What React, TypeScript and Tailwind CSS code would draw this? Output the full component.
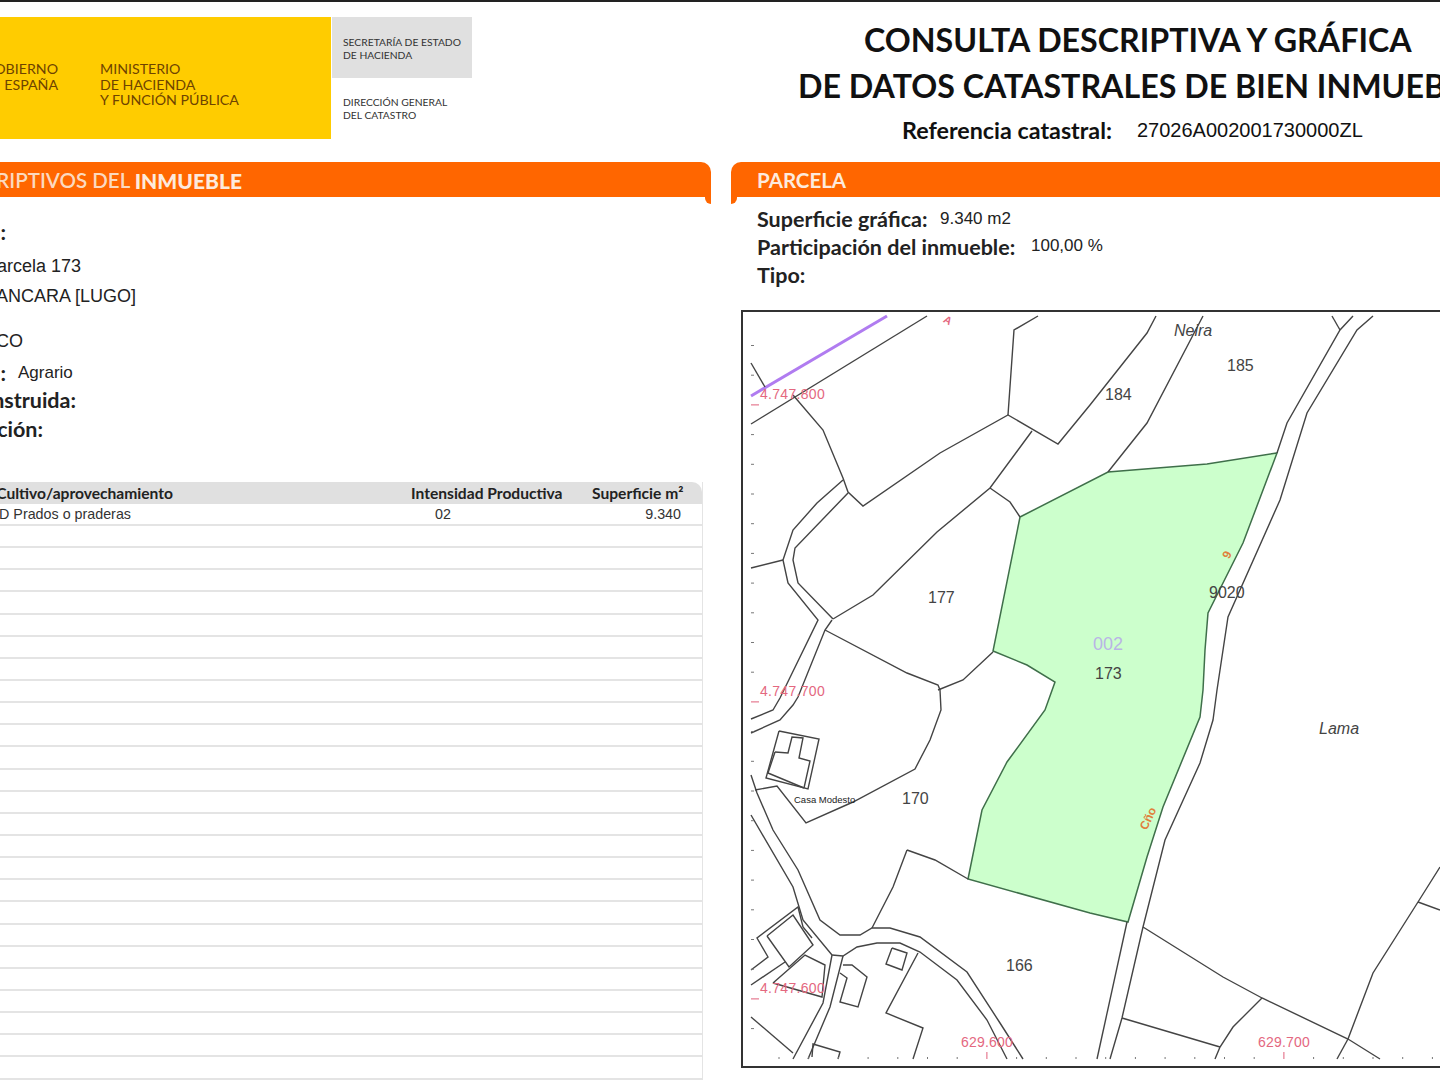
import React from "react";

const heading = "font-['Lato','Open_Sans',sans-serif]";
const body = "font-['Liberation_Sans',Arial,sans-serif]";

const lines = [
  "751,424 927,316",
  "751,363 765,387",
  "793,395 823,430 843,478 848,492 863,506 940,453 1008,415 1058,444 1090,405 1147,333 1156,316",
  "1008,415 1014,330 1038,316",
  "843,480 817,503 793,530 783,560 788,583 818,620 780,698 773,710 751,719",
  "848,493 795,548 793,560 798,583 833,619",
  "832,620 825,630 798,697 793,705 780,720 751,733",
  "751,568 783,560",
  "833,619 873,595 937,532 990,488 1032,431",
  "990,488 1010,502 1020,517",
  "825,630 907,673 938,685 940,690 941,710 930,740 915,769 853,802 806,823 777,786 755,790",
  "938,690 963,680 993,652",
  "1373,316 1357,330 1307,413 1280,500 1228,617 1217,690 1213,720 1200,763 1165,840 1143,927 1122,1018 1110,1059",
  "1353,316 1340,330 1287,423 1277,453",
  "1127,922 1097,1059",
  "1332,316 1340,330",
  "1203,316 1147,423 1108,472",
  "1143,927 1223,977 1262,998 1348,1039 1380,1059",
  "1262,998 1233,1027 1220,1047 1215,1059",
  "1122,1018 1220,1047",
  "1348,1039 1373,973 1418,902 1440,867",
  "1418,902 1440,910",
  "1348,1039 1337,1059",
  "907,850 935,860 968,879",
  "907,850 893,887 872,928",
  "751,775 757,793 773,830 798,870 820,920 840,935 860,935 872,928 890,928 920,937 967,972 1000,1023 1023,1059",
  "751,815 793,887 803,920 832,955",
  "832,955 843,956 857,947 877,943 900,943 920,952 957,980 987,1020 1007,1059",
  "832,955 823,1003 793,1059",
  "843,956 830,1007 808,1059",
  "779,731 819,739 808,789 766,778 779,731",
  "775,752 788,753 792,737 803,738 799,758 810,761 804,788",
  "775,752 768,773 804,788",
  "767,936 793,915 813,945 789,967 767,936",
  "751,970 768,957 757,938 798,907 803,927 812,938",
  "773,983 805,955 825,965 822,997 773,983",
  "751,985 785,962",
  "751,1017 793,1053",
  "843,965 852,965 867,977 858,1007 840,1002 847,978 840,973",
  "892,948 907,953 902,970 886,964 892,948",
  "918,953 886,1013 923,1028 913,1059",
  "812,1057 813,1044 840,1052 838,1059",
];

const parcel =
  "1020,517 1108,472 1207,464 1277,453 1243,543 1208,613 1205,650 1203,690 1200,717 1163,807 1147,857 1128,922 1090,913 968,879 982,810 1007,762 1045,710 1055,682 1027,665 993,651";

const leftTicks = Array.from({ length: 24 }, (_, i) => 345.5 + 29.7 * i);
const bottomTicks = Array.from({ length: 23 }, (_, i) => 779 + 29.7 * i);

function CadastralMap() {
  return (
    <svg viewBox="743 312 697 754" className="block w-full h-full">
      <polygon points={parcel} fill="#ccffcc" stroke="#3f6f4a" strokeWidth="1.5" />
      <line x1="751" y1="396" x2="887" y2="316" stroke="#b07cf0" strokeWidth="3" />
      {lines.map((pts) => (
        <polyline key={pts} points={pts} fill="none" stroke="#444" strokeWidth="1.4" />
      ))}
      {leftTicks.map((y, i) => (
        <line
          key={y}
          x1="751"
          x2={i === 2 || i === 12 || i === 22 ? 759 : 754}
          y1={y}
          y2={y}
          stroke={i === 2 || i === 12 || i === 22 ? "#e0607a" : "#777"}
        />
      ))}
      {bottomTicks.map((x, i) => (
        <line
          key={x}
          x1={x}
          x2={x}
          y1={i === 7 || i === 17 ? 1052 : 1057}
          y2="1059"
          stroke={i === 7 || i === 17 ? "#e0607a" : "#777"}
        />
      ))}
      <g fill="#e4687f" fontFamily="Liberation Sans" fontSize="14">
        <text x="760" y="399" letterSpacing="0.3">4.747.800</text>
        <text x="760" y="696" letterSpacing="0.3">4.747.700</text>
        <text x="760" y="993" letterSpacing="0.3">4.747.600</text>
        <text x="961" y="1047" letterSpacing="0.2">629.600</text>
        <text x="1258" y="1047" letterSpacing="0.2">629.700</text>
        <text x="944" y="324" fontSize="11" fontWeight="bold" transform="rotate(30 948 320)">A</text>
      </g>
      <g fill="#444" fontFamily="Liberation Sans" fontSize="16">
        <text x="928" y="603">177</text>
        <text x="1105" y="400">184</text>
        <text x="1227" y="371">185</text>
        <text x="1209" y="598">9020</text>
        <text x="1095" y="679">173</text>
        <text x="902" y="804">170</text>
        <text x="1006" y="971">166</text>
        <text x="1174" y="336" fontStyle="italic">Neira</text>
        <text x="1319" y="734" fontStyle="italic">Lama</text>
        <text x="794" y="803" fontSize="9.5" fill="#222">Casa Modesto</text>
      </g>
      <text x="1093" y="650" fill="#b9b4e6" fontFamily="Liberation Sans" fontSize="18">002</text>
      <g fill="#e0803c" fontFamily="Liberation Sans" fontSize="12" fontWeight="bold">
        <text x="1224" y="559" transform="rotate(-65 1227 555)">9</text>
        <text x="1138" y="825" transform="rotate(-65 1147 821)">Cño</text>
      </g>
    </svg>
  );
}

function Bar({ side, children }: { side: "left" | "right"; children: React.ReactNode }) {
  return (
    <div>
      <div
        className={`h-[35px] pt-[2px] bg-[#ff6600] flex items-center text-[20.5px] font-bold text-[#fdeadd] whitespace-nowrap ${heading} ${
          side === "left" ? "rounded-tr-[10px]" : "rounded-tl-[10px] pl-[26px]"
        }`}
      >
        {children}
      </div>
      <div className={`flex h-[7px] ${side === "left" ? "justify-end" : "justify-start"}`}>
        <div
          className={`w-[6px] h-[7px] bg-[#ff6600] ${side === "left" ? "rounded-bl-[6px]" : "rounded-br-[6px]"}`}
        ></div>
      </div>
    </div>
  );
}

function CutRow({ width, className, children }: { width: number; className: string; children: React.ReactNode }) {
  return (
    <div className={`flex justify-end whitespace-nowrap ${className}`} style={{ width }}>
      {children}
    </div>
  );
}

const App: React.FC = () => {
  const emptyRows = Array.from({ length: 25 }, (_, i) => i);

  return (
    <div className={`w-[1440px] h-[1080px] overflow-hidden bg-white border-t-2 border-[#222] text-[#222] ${body}`}>
      <div className="flex h-[160px]">
        <div className="flex w-[472px] shrink-0 pt-[15px] h-[137px]">
          <div className={`w-[331px] h-[122px] bg-[#ffcc00] text-[#6e4300] text-[14.2px] leading-[15.5px] flex pt-[44px] ${heading}`}>
            <div className="w-[58px] flex flex-col items-end whitespace-nowrap">
              <div className="flex justify-end">GOBIERNO</div>
              <div className="flex justify-end">
                DE <span className="ml-[7px]">ESPAÑA</span>
              </div>
            </div>
            <div className="ml-[42px]">
              <div>MINISTERIO</div>
              <div>DE HACIENDA</div>
              <div>Y FUNCIÓN PÚBLICA</div>
            </div>
          </div>
          <div className={`w-[140px] ml-[1px] text-[10.3px] leading-[12.5px] text-[#333] ${heading}`}>
            <div className="h-[61px] bg-[#e0e0e0] pl-[11px] pt-[19px]">
              <div>SECRETARÍA DE ESTADO</div>
              <div>DE HACIENDA</div>
            </div>
            <div className="pl-[11px] pt-[18px]">
              <div>DIRECCIÓN GENERAL</div>
              <div>DEL CATASTRO</div>
            </div>
          </div>
        </div>
        <div className={`pt-[15px] whitespace-nowrap font-bold text-[32.2px] leading-[46px] text-[#111] ${heading}`}>
          <div className="pl-[392px]">CONSULTA DESCRIPTIVA Y GRÁFICA</div>
          <div className="pl-[326px]">DE DATOS CATASTRALES DE BIEN INMUEBLE</div>
          <div className="pl-[430px] flex items-center text-[23.3px] leading-[42px]">
            <span className="w-[235px]">Referencia catastral:</span>
            <span className={`font-normal text-[20px] ${body}`}>27026A002001730000ZL</span>
          </div>
        </div>
      </div>

      <div className="flex gap-[20px]">
        <div className="w-[711px] shrink-0">
          <Bar side="left">
            <CutRow width={242} className="items-center">
              <span className="font-semibold text-[#fbd9bf]">DATOS DESCRIPTIVOS DEL&nbsp;</span>
              <span className="font-black text-[21px]">INMUEBLE</span>
            </CutRow>
          </Bar>

          <div className="pt-[14px] text-[18px]">
            <CutRow width={6} className={`h-[28px] items-center font-bold text-[21.5px] ${heading}`}>Localización:</CutRow>
            <CutRow width={81} className="h-[30px] mt-[5px] items-center">Polígono 2 Parcela 173</CutRow>
            <CutRow width={136} className="h-[29px] mt-[1px] items-center">LANCARA [LUGO]</CutRow>
            <CutRow width={23} className="h-[29px] mt-[16px] items-center">RUSTICO</CutRow>
            <div className="flex h-[28px] mt-[3px] mb-[-1px] items-center whitespace-nowrap">
              <CutRow width={6} className={`font-bold text-[21.5px] ${heading}`}>Uso principal:</CutRow>
              <span className="ml-[12px] text-[17px]">Agrario</span>
            </div>
            <CutRow width={76} className={`h-[29px] items-center font-bold text-[21.5px] ${heading}`}>Superficie construida:</CutRow>
            <CutRow width={43} className={`h-[29px] items-center font-bold text-[21.5px] ${heading}`}>Año construcción:</CutRow>
          </div>

          <div className="w-[703px] mt-[38px] border-r border-[#e4e4e4]">
            <div className={`grid grid-cols-[411px_181px_1fr] h-[22px] pb-[3px] items-center bg-[#e0e0e0] rounded-tr-[10px] text-[15.6px] font-bold text-[#222] ${heading}`}>
              <CutRow width={173} className="">Subparcela Cultivo/aprovechamiento</CutRow>
              <div className="whitespace-nowrap">Intensidad Productiva</div>
              <div className="whitespace-nowrap">Superficie m²</div>
            </div>
            <div className="grid grid-cols-[411px_181px_1fr] h-[22px] items-center border-b-2 border-[#e4e4e4] text-[14.3px] text-[#333]">
              <CutRow width={131} className="">a MD Prados o praderas</CutRow>
              <div className="pl-[24px]">02</div>
              <div className="text-right pr-[21px]">9.340</div>
            </div>
            {emptyRows.map((i) => (
              <div key={i} className="h-[22.15px] border-b-2 border-[#e4e4e4]"></div>
            ))}
          </div>
        </div>

        <div className="flex-1 min-w-0">
          <Bar side="right">PARCELA</Bar>
          <div className={`pl-[26px] pt-[1px] h-[106px] font-bold text-[21.5px] leading-[28px] text-[#222] ${heading}`}>
            <div className="flex items-center">
              <span className="w-[183px]">Superficie gráfica:</span>
              <span className={`font-normal text-[17px] ${body}`}>9.340 m2</span>
            </div>
            <div className="flex items-center">
              <span className="w-[274px]">Participación del inmueble:</span>
              <span className={`font-normal text-[17px] -mt-[2px] ${body}`}>100,00 %</span>
            </div>
            <div>Tipo:</div>
          </div>
          <div className="ml-[10px] h-[758px] border-2 border-r-0 border-[#333]">
            <CadastralMap />
          </div>
        </div>
      </div>
    </div>
  );
};

export default App;
